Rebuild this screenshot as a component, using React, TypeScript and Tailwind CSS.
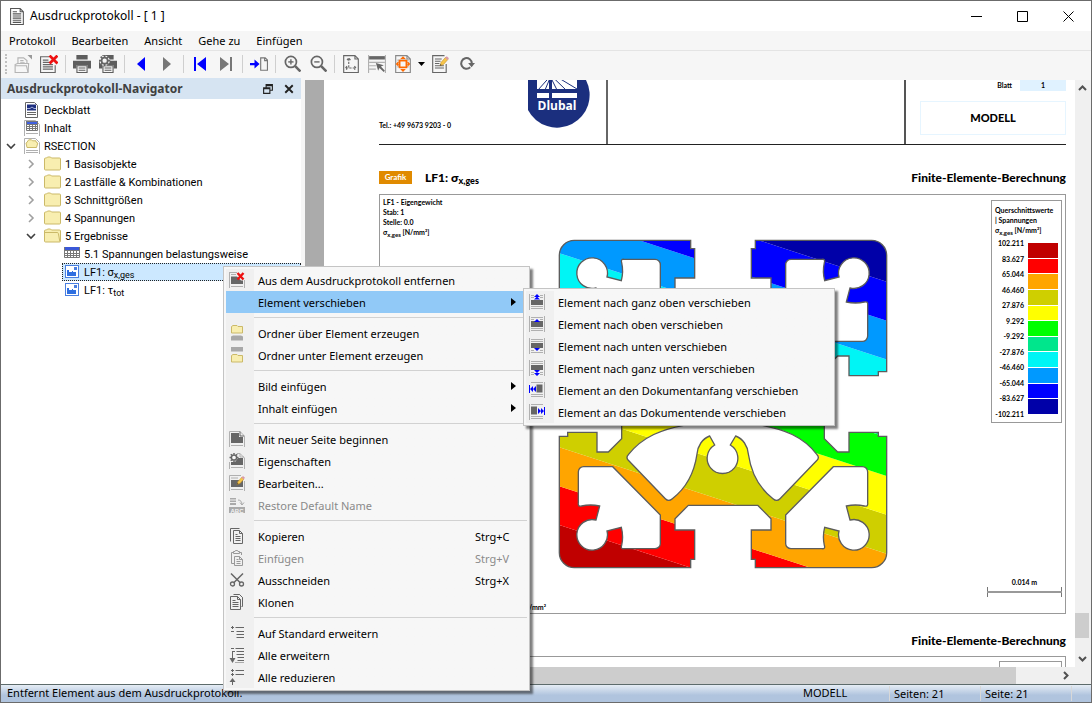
import type { ReactNode } from 'react';

const UI = "font-['Noto_Sans',sans-serif]";
const TREE = "font-['Roboto',sans-serif]";
const DOC = "font-['Lato',sans-serif]";

const G = '#666666';
const L = '#b0b0b0';
const B = '#0000ff';

type IconProps = { children: ReactNode; size?: number };

const Icon = ({ children, size = 16 }: IconProps) => (
  <svg width={size} height={size} viewBox="0 0 16 16" fill="none" className="shrink-0" aria-hidden="true">
    {children}
  </svg>
);

/* ---------- shared glyph parts ---------- */

const Folder = ({ open = false }: { open?: boolean }) => (
  <svg width="17" height="16" viewBox="0 0 17 16" className="shrink-0" aria-hidden="true">
    <path d="M.5 13V3q0-1 1-1H2.500l1-1h3l1 1h8q1 0 1 1v10q0 1-1 1h-14q-1 0-1-1z" fill="#f8eeb0" stroke="#cbb968" />
    {open && <path d="M.8 4.500h12.400q1 0 1.200 1l1.400 8" fill="none" stroke="#cbb968" />}
  </svg>
);

const SideLines = () => <path d="M.5 0v16M15.500 0v16" stroke={L} />;

const Cross = () => <path d="M8.500 1l6 6.500M14.500 1l-6 6.500" stroke="#ee1111" strokeWidth="2.400" />;

const Pencil = () => (
  <>
    <path d="M8 9.500l1-3 4-4.500 2 2-4 4.500z" fill="#f7c64b" stroke="#c08a20" strokeWidth=".5" />
    <path d="M12.500 2.500l1.500-1.500 2 1.800-1.500 1.700z" fill="#d89aa8" />
    <path d="M8 9.500l.5-1.500 1 1z" fill="#333" />
  </>
);

const PageOutline = ({ color = G }: { color?: string }) => (
  <path d="M1.500.5h10l3 3v12h-13zM11.500.5v3h3" stroke={color} />
);

/* ---------- context menu icons ---------- */

const icons = {
  remove: (
    <Icon>
      <path d="M.5 0v16M15.500 8v8M2 14.500h12M1 .5h7M2 2.500h5" stroke={L} />
      <path d="M2 4.500h6l4 4h2v3.500H2z" fill={G} />
      <Cross />
    </Icon>
  ),
  folderAbove: (
    <Icon>
      <path d="M2.500 8V1.500L4 .5h4l1 1h4.500V8z" fill="#f8eeb0" stroke="#cbb968" />
      <path d="M2 15.500v-4l2-1h8l2 1v4z" fill="#a8a8a8" />
    </Icon>
  ),
  folderBelow: (
    <Icon>
      <path d="M2 0h12v4.500H2z" fill="#a8a8a8" />
      <path d="M2.500 15V8.500L4 7.500h4l1 1h4.500V15z" fill="#f8eeb0" stroke="#cbb968" />
    </Icon>
  ),
  newPage: (
    <Icon>
      <path d="M.5 16V.5H11L15.500 5V16M2 14.500h12" stroke={L} />
      <path d="M2 2h8v4h4v6H2z" fill={G} />
      <path d="M11 .5V5h4" stroke={G} />
    </Icon>
  ),
  properties: (
    <Icon>
      <path d="M.5 16V9M8 .5h3L15.500 5v11M2 14.500h12" stroke={L} />
      <path d="M9 5h5v7H2V9h4z" fill={G} />
      <circle cx="5" cy="4.500" r="2.600" fill="#f7f7f7" stroke={G} strokeWidth="1.500" />
      <path d="M5 0v1.500M5 7.500V9M.5 4.500H2M8 4.500h1.500M1.800 1.300l1 1M8.200 1.300l-1 1M1.800 7.700l1-1" stroke={G} strokeWidth="1.500" />
      <path d="M11 .5V4h4" stroke={L} />
    </Icon>
  ),
  edit: (
    <Icon>
      <path d="M.5 16V.5H12M15.500 6v10M2 14.500h12M2 3h7" stroke={L} />
      <path d="M2 5h12v7H2z" fill={G} />
      <Pencil />
    </Icon>
  ),
  restore: (
    <Icon>
      <path d="M1 1h6v7H1z" fill="#aaa" />
      <path d="M1 3h6M1 5.500h6" stroke="#f0f0f0" />
      <path d="M9 3q4 0 4 5M11 5.500l2 2.500 2-2.500" stroke="#aaa" />
      <rect x="0" y="10" width="16" height="6" fill="#aaa" />
      <text x="8" y="15.500" fontSize="6" textAnchor="middle" fill="#f6f6f6" fontFamily="Liberation Sans" fontWeight="bold">ABC</text>
    </Icon>
  ),
  copy: (
    <Icon>
      <path d="M1.500 13.500V.5h9" stroke={G} />
      <path d="M4.500 2.500h6l3 3v10h-9zM10.500 2.500v3h3M6.500 6.500h2M6.500 8.500h5M6.500 10.500h5M6.500 12.500h5" stroke={G} />
    </Icon>
  ),
  paste: (
    <Icon>
      <path d="M5 13.500H2.500v-11h2M10.500 2.500h2V5" stroke="#999" />
      <path d="M4.500 3.500h6v-2H9L8.500.5h-2L6 1.500H4.500z" stroke="#999" />
      <path d="M5.500 6.500h5l3 3v6h-8zM10.500 6.500v3h3M7.500 9.500h2M7.500 11.500h4M7.500 13.500h4" stroke="#999" />
    </Icon>
  ),
  cut: (
    <Icon>
      <path d="M2 1.500l9.500 9.500M14 1.500L4.500 11" stroke={G} strokeWidth="1.500" />
      <circle cx="3.500" cy="12" r="2" stroke={G} strokeWidth="1.300" />
      <circle cx="12.500" cy="12" r="2" stroke={G} strokeWidth="1.300" />
    </Icon>
  ),
  clone: (
    <Icon>
      <path d="M4.500.5h6l3 3v9h-1M10.500.5l3 3" stroke={G} />
      <path d="M1.500 2.500h7l3 3v10h-10zM8.500 2.500v3h3M3.500 6.500h3M3.500 8.500h6M3.500 10.500h6M3.500 12.500h6" stroke={G} />
    </Icon>
  ),
  expandDefault: (
    <Icon>
      <path d="M2 2.500h3M3.500 1v3M2 6.500h3M6.500 2.500H15M7.500 6.500H15M7.500 9.500H15M7.500 12.500H15" stroke={G} />
    </Icon>
  ),
  expandAll: (
    <Icon>
      <path d="M2 1.500h3M3.500 5v8M6.500 1.500H15M3 4.500h3M7.500 4.500H15M7.500 7.500H15M8.500 10.500H15M8.500 13.500H15M6 16h9" stroke={G} />
      <path d="M.5 11h6l-3 5z" fill={G} />
    </Icon>
  ),
  collapseAll: (
    <Icon>
      <path d="M2 1.500h3M3.500 0v3M2 5.500h3M3.500 4v3M6.500 1.500H15M6.500 5.500H15M3.500 10v6" stroke={G} />
      <path d="M.5 13h6l-3-4z" fill={G} />
    </Icon>
  ),
  toTop: (
    <Icon>
      <SideLines />
      <path d="M2 1.500h3M11 1.500h3M2 3.500h3M11 3.500h3M2 12.500h12M2 14.500h12" stroke={L} />
      <path d="M2 6h12v5H2z" fill={G} />
      <path d="M8 0l3 3H5zM8 2.500l3 3H5z" fill={B} />
    </Icon>
  ),
  up: (
    <Icon>
      <SideLines />
      <path d="M2 1.500h12M2 12.500h12M2 14.500h12M2 3.500h3M11 3.500h3" stroke={L} />
      <path d="M2 5h12v6H2z" fill={G} />
      <path d="M8 3l3 3H5z" fill={B} />
    </Icon>
  ),
  down: (
    <Icon>
      <SideLines />
      <path d="M2 1.500h12M2 3.500h12M2 12.500h3M11 12.500h3M2 14.500h12" stroke={L} />
      <path d="M2 5h12v5H2z" fill={G} />
      <path d="M8 13l3-3H5z" fill={B} />
    </Icon>
  ),
  toBottom: (
    <Icon>
      <SideLines />
      <path d="M2 1.500h12M2 3.500h12M2 12.500h3M11 12.500h3M2 14.500h3M11 14.500h3" stroke={L} />
      <path d="M2 5h12v5H2z" fill={G} />
      <path d="M8 13l3-3H5zM8 16l3-3H5z" fill={B} />
    </Icon>
  ),
  toStart: (
    <Icon>
      <path d="M2 .5h12M2 12.500h12M2 14.500h12M15.500 0v16" stroke={L} />
      <path d="M7.500 2.500h6v8h-6z" fill={G} />
      <path d="M.5 3v8" stroke={B} />
      <path d="M1 7l3-3v6zM4 7l3-3v6z" fill={B} />
    </Icon>
  ),
  toEnd: (
    <Icon>
      <path d="M2 .5h12M2 12.500h12M2 14.500h12M.5 0v16" stroke={L} />
      <path d="M2 2.500h6v8H2z" fill={G} />
      <path d="M15.500 3v8" stroke={B} />
      <path d="M12 7L9 4v6zM15 7l-3-3v6z" fill={B} />
    </Icon>
  ),
};

type IconName = keyof typeof icons;

type Entry = {
  label: string;
  icon?: IconName;
  shortcut?: string;
  submenu?: boolean;
  active?: boolean;
  disabled?: boolean;
};

const contextGroups: Entry[][] = [
  [
    { label: 'Aus dem Ausdruckprotokoll entfernen', icon: 'remove' },
    { label: 'Element verschieben', submenu: true, active: true },
  ],
  [
    { label: 'Ordner über Element erzeugen', icon: 'folderAbove' },
    { label: 'Ordner unter Element erzeugen', icon: 'folderBelow' },
  ],
  [
    { label: 'Bild einfügen', submenu: true },
    { label: 'Inhalt einfügen', submenu: true },
  ],
  [
    { label: 'Mit neuer Seite beginnen', icon: 'newPage' },
    { label: 'Eigenschaften', icon: 'properties' },
    { label: 'Bearbeiten...', icon: 'edit' },
    { label: 'Restore Default Name', icon: 'restore', disabled: true },
  ],
  [
    { label: 'Kopieren', icon: 'copy', shortcut: 'Strg+C' },
    { label: 'Einfügen', icon: 'paste', shortcut: 'Strg+V', disabled: true },
    { label: 'Ausschneiden', icon: 'cut', shortcut: 'Strg+X' },
    { label: 'Klonen', icon: 'clone' },
  ],
  [
    { label: 'Auf Standard erweitern', icon: 'expandDefault' },
    { label: 'Alle erweitern', icon: 'expandAll' },
    { label: 'Alle reduzieren', icon: 'collapseAll' },
  ],
];

const moveGroups: Entry[][] = [
  [
    { label: 'Element nach ganz oben verschieben', icon: 'toTop' },
    { label: 'Element nach oben verschieben', icon: 'up' },
    { label: 'Element nach unten verschieben', icon: 'down' },
    { label: 'Element nach ganz unten verschieben', icon: 'toBottom' },
    { label: 'Element an den Dokumentanfang verschieben', icon: 'toStart' },
    { label: 'Element an das Dokumentende verschieben', icon: 'toEnd' },
  ],
];

const PopupMenu = ({ groups, className }: { groups: Entry[][]; className: string }) => (
  <div
    role="menu"
    className={`absolute border border-[#c4c4c4] bg-[#f7f7f7] p-0.5 text-[11px] shadow-[3px_3px_2px_rgba(0,0,0,0.5)] ${UI} ${className}`}
  >
    <div className="bg-linear-to-r from-[#f0f0f0] from-[28px] to-[#f7f7f7] to-[28px]">
      {groups.map((group, i) => (
        <div key={i}>
          {i > 0 && (
            <div className="flex h-[9px] items-center pl-7">
              <div className="h-px flex-1 bg-[#d2d2d2]" />
            </div>
          )}
          {group.map((entry) => (
            <button
              key={entry.label}
              type="button"
              role="menuitem"
              disabled={entry.disabled}
              className={`flex h-[22px] w-full items-center pr-[11px] pl-[3px] text-left ${entry.active ? 'bg-[#91c9f7]' : ''} ${entry.disabled ? 'text-[#8a8a8a]' : 'text-black'}`}
            >
              <span className="w-[29px] shrink-0">{entry.icon && icons[entry.icon]}</span>
              <span className="flex-1 pt-0.5 whitespace-nowrap">{entry.label}</span>
              {entry.shortcut && <span className="w-[41px] pt-0.5 whitespace-nowrap">{entry.shortcut}</span>}
              {entry.submenu && (
                <svg width="5" height="8" viewBox="0 0 5 8" aria-hidden="true">
                  <path d="M0 0l5 4-5 4z" />
                </svg>
              )}
            </button>
          ))}
        </div>
      ))}
    </div>
  </div>
);

/* ---------- toolbar ---------- */

const Printer = () => (
  <>
    <path d="M3 0h10v4H3zM0 5h16v7h-3V9H3v3H0z" fill="#5e5e5e" />
    <path d="M3.500 9.500h9v6h-9zM5 11.500h6M5 13.500h6" stroke="#5e5e5e" />
  </>
);

const Magnifier = ({ plus = false }: { plus?: boolean }) => (
  <Icon size={17}>
    <circle cx="6.500" cy="6.500" r="5.200" stroke={G} strokeWidth="1.600" />
    <path d="M10.500 10.500l5 5" stroke={G} strokeWidth="2.400" />
    <path d="M4 6.500h5" stroke={G} strokeWidth="1.300" />
    {plus && <path d="M6.500 4v5" stroke={G} strokeWidth="1.300" />}
  </Icon>
);

type Tool = { name: string; icon: ReactNode };

const toolGroups: Tool[][] = [
  [
    {
      name: 'Öffnen',
      icon: (
        <Icon size={18}>
          <path d="M3.500 7.500V2.500h5l3 2.500v2.500M5.500 5h3M5.500 7h4M1 15.500V8.500l2-1h10l-.5 8z" stroke="#b4b4b4" />
          <path d="M1 9.500h10l1.500 6" stroke="#b4b4b4" />
          <path d="M12 0h4v4z" fill="#999" />
        </Icon>
      ),
    },
    {
      name: 'Löschen',
      icon: (
        <Icon size={18}>
          <path d="M8 1.500H.5v14h13V9M2.500 4.500h5M2.500 6.500h6M2.500 8.500h9M2.500 10.500h9M2.500 12.500h9" stroke={G} />
          <path d="M8.500.5l7 7M15.500.5l-7 7" stroke="#ee1111" strokeWidth="2.400" />
        </Icon>
      ),
    },
  ],
  [
    { name: 'Drucken', icon: <Icon size={18}><Printer /></Icon> },
    {
      name: 'Druckeinstellungen',
      icon: (
        <Icon size={18}>
          <Printer />
          <circle cx="5" cy="5" r="4.600" fill="#f6f6f6" />
          <circle cx="5" cy="5" r="2.700" stroke={G} strokeWidth="1.500" />
          <path d="M5 0v2M5 8v2M0 5h2M8 5h2M1.500 1.500l1.300 1.300M7.200 7.200l1.300 1.300M8.500 1.500L7.200 2.800M2.800 7.200L1.500 8.500" stroke={G} strokeWidth="1.500" />
        </Icon>
      ),
    },
  ],
  [
    { name: 'Zurück', icon: <Icon><path d="M12 1v14L4 8z" fill={B} /></Icon> },
    { name: 'Vorwärts', icon: <Icon><path d="M4 1v14l8-7z" fill="#777" /></Icon> },
  ],
  [
    { name: 'Erste Seite', icon: <Icon><path d="M2 1h2v14H2zM14 1v14L5 8z" fill={B} /></Icon> },
    { name: 'Letzte Seite', icon: <Icon><path d="M12 1h2v14h-2zM2 1v14l9-7z" fill="#777" /></Icon> },
  ],
  [
    {
      name: 'Gehe zu Seite',
      icon: (
        <Icon size={18}>
          <path d="M0 7h4V4l4.500 4L4 12V9H0z" fill={B} />
          <path d="M9.500 2.500h4l2 2v9h-6zM13 2.500V5h2.500" stroke="#777" />
        </Icon>
      ),
    },
  ],
  [
    { name: 'Vergrößern', icon: <Magnifier plus /> },
    { name: 'Verkleinern', icon: <Magnifier /> },
  ],
  [
    {
      name: 'Ganze Seite',
      icon: (
        <Icon size={18}>
          <PageOutline />
          <path d="M6 3v9M3.500 11.500h9M4.500 4.500L6 2.500l1.500 2M11 10l1.500 1.500L11 13M4.500 10L3 11.500 4.500 13" stroke={G} strokeDasharray="2 1" />
        </Icon>
      ),
    },
    {
      name: 'Auswahl',
      icon: (
        <Icon size={18}>
          <path d="M.5 0v16M15.500 0v16" stroke={L} />
          <path d="M1 1h14v3H1z" fill={G} />
          <path d="M1 6.500h14M1 9.500h6M1 12.500h6" stroke={L} />
          <path d="M7 7l7 2-2.500 1.200L15 14l-1 1-3.800-3.500L9 14z" fill={G} />
        </Icon>
      ),
    },
    {
      name: 'Seitenausrichtung',
      icon: (
        <Icon size={18}>
          <PageOutline color="#888" />
          <path d="M3 4.500h10M3 6.500h10M3 8.500h10M3 10.500h10" stroke={L} />
          <rect x="5" y="5" width="6" height="6" fill="#f6f6f6" stroke="#ff6a00" strokeWidth="1.500" />
          <path d="M8 1l2.500 2.500h-5zM8 15l2.500-2.500h-5zM1.500 8L4 5.500v5zM14.500 8L12 5.500v5z" fill="#ff6a00" />
        </Icon>
      ),
    },
  ],
];

const trailingTools: Tool[] = [
  {
    name: 'Bearbeiten',
    icon: (
      <Icon size={18}>
        <path d="M12 .5H1.500v15h12V8M3.500 3.500h6M3.500 5.500h5M3.500 7.500h4M3.500 9.500h8M3.500 11.500h8" stroke={G} />
        <Pencil />
      </Icon>
    ),
  },
  {
    name: 'Aktualisieren',
    icon: (
      <Icon size={17}>
        <path d="M11.500 11.500A5 5 0 1 1 13 8" stroke={G} strokeWidth="1.900" />
        <path d="M9.500 7.500h6.500l-3.200 4z" fill={G} />
      </Icon>
    ),
  },
];

const ToolButton = ({ name, icon }: Tool) => (
  <button type="button" aria-label={name} className="flex h-6 w-[26px] items-center justify-center">
    {icon}
  </button>
);

const Toolbar = () => (
  <div role="toolbar" className="flex h-[27px] shrink-0 items-center bg-[#f6f6f6] pb-0.5 pl-1">
    <span className="mr-[3px] h-5 border-l-2 border-dotted border-[#c0c0c0]" />
    {toolGroups.map((group, i) => (
      <div key={i} className="flex items-center">
        {i > 0 && <span className="mx-[3px] h-[18px] w-px bg-[#cfcfcf]" />}
        {group.map((tool) => (
          <ToolButton key={tool.name} {...tool} />
        ))}
      </div>
    ))}
    <button type="button" aria-label="Optionen" className="flex w-[11px] justify-center">
      <svg width="7" height="4" viewBox="0 0 7 4" aria-hidden="true">
        <path d="M0 0h7L3.500 4z" />
      </svg>
    </button>
    {trailingTools.map((tool) => (
      <ToolButton key={tool.name} {...tool} />
    ))}
  </div>
);

/* ---------- navigator ---------- */

const Chevron = ({ open }: { open: boolean }) => (
  <svg width="10" height="10" viewBox="0 0 10 10" fill="none" aria-hidden="true">
    <path d={open ? 'M1 3l4 4 4-4' : 'M3 1l4 4-4 4'} stroke={open ? '#404040' : '#a0a0a0'} strokeWidth="1.600" />
  </svg>
);

const CoverIcon = () => (
  <Icon>
    <path d="M1.500.5h9l3 3v12h-12z" fill="#fff" stroke={G} />
    <path d="M3 2.500h9v6H3z" fill="#1e2f80" />
    <path d="M3 6.500h3l2-1.500 2 1.500h2" stroke="#c8d0f0" strokeWidth=".8" />
    <path d="M3 10.500h9M3 12.500h9" stroke={G} />
  </Icon>
);

const TableGrid = () => (
  <>
    <path d="M2 1h12v3.500H2z" fill="#4060e0" />
    <path d="M2.500 1.500h11v9h-11zM2 4.500h12M2 6.500h12M2 8.500h12M5.500 4v7M8.500 4v7M11.500 4v7" stroke="#777" />
  </>
);

const ContentsIcon = () => (
  <Icon>
    <path d="M.5 16V.5h11l4 4V16M2 13.500h12" stroke={L} />
    <TableGrid />
  </Icon>
);

const ModelIcon = () => (
  <Icon>
    <path d="M.5 16V.5h11l4 4V16M2 12.500h12M2 14.500h12" stroke={L} />
    <path d="M3 9.500L2 5l1.500-1V3L5 1.800h2.500l1 1H12V4l1.800 1-1.300 4.500z" fill="#f8eeb0" stroke="#cbb968" />
  </Icon>
);

const TableIcon = () => (
  <Icon>
    <path d="M.5 1.500h15v10H.5z" fill="#fff" />
    <path d="M0 1h16v3H0z" fill="#3a58d8" />
    <path d="M.5 1v10.500h15V1M0 4.500h16M0 7.500h16M0 9.500h16M3.500 4v8M6.500 4v8M9.500 4v8M12.500 4v8" stroke="#777" />
  </Icon>
);

const GraphicIcon = () => (
  <Icon>
    <rect x="1.500" y="1.500" width="13" height="12" fill="#fff" stroke="#4a7fe0" />
    <path d="M3 12V6h2v2h3v-1h1v1h3v4z" fill="#2f6fe0" />
    <path d="M10 3h3v3h-3z" fill="#4a7fe0" />
  </Icon>
);

type Node = { label: ReactNode; level: 0 | 1 | 2; icon: ReactNode; open?: boolean; selected?: boolean };

const nodes: Node[] = [
  { label: 'Deckblatt', level: 0, icon: <CoverIcon /> },
  { label: 'Inhalt', level: 0, icon: <ContentsIcon /> },
  { label: 'RSECTION', level: 0, icon: <ModelIcon />, open: true },
  { label: '1 Basisobjekte', level: 1, icon: <Folder />, open: false },
  { label: '2 Lastfälle & Kombinationen', level: 1, icon: <Folder />, open: false },
  { label: '3 Schnittgrößen', level: 1, icon: <Folder />, open: false },
  { label: '4 Spannungen', level: 1, icon: <Folder />, open: false },
  { label: '5 Ergebnisse', level: 1, icon: <Folder open />, open: true },
  { label: '5.1 Spannungen belastungsweise', level: 2, icon: <TableIcon /> },
  { label: <>LF1: σ<sub className="text-[9px]">x,ges</sub></>, level: 2, icon: <GraphicIcon />, selected: true },
  { label: <>LF1: τ<sub className="text-[9px]">tot</sub></>, level: 2, icon: <GraphicIcon /> },
];

const indents = ['pl-[5px]', 'pl-[25px]', 'pl-[42px]'];

const Navigator = () => (
  <aside className="flex w-[300px] shrink-0 flex-col bg-white">
    <header className="flex h-[21px] items-center bg-[#d6e4f2] pr-[7px] pl-1.5">
      <h2 className={`flex-1 text-[12px] font-bold text-[#404040] ${UI}`}>Ausdruckprotokoll-Navigator</h2>
      <button type="button" aria-label="Andocken" className="mr-[11px]">
        <Icon size={10}>
          <path d="M5 5V1h10v9h-4M1 6h10v9H1zM1 7.500h10M5 2.500h10" stroke="#222" strokeWidth="1.800" />
        </Icon>
      </button>
      <button type="button" aria-label="Schließen">
        <Icon size={10}>
          <path d="M2 2l12 12M14 2L2 14" stroke="#222" strokeWidth="3" />
        </Icon>
      </button>
    </header>
    <ul role="tree" className={`pt-0.5 text-[11px] text-black ${TREE}`}>
      {nodes.map((node, i) => (
        <li key={i} role="treeitem" aria-selected={!!node.selected} className={`flex h-[18px] items-center ${indents[node.level]}`}>
          {node.level < 2 && (
            <button type="button" aria-label="Umschalten" className="mr-2 flex w-[10px] shrink-0">
              {node.open !== undefined && <Chevron open={node.open} />}
            </button>
          )}
          <button
            type="button"
            className={`flex h-[18px] items-center gap-1 whitespace-nowrap ${node.level === 2 ? 'ml-[19px] flex-1 pl-0.5' : ''} ${node.selected ? 'bg-[#cce8ff] outline-1 -outline-offset-1 outline-dotted outline-[#222]' : ''}`}
          >
            {node.icon}
            <span className="pt-0.5 leading-4">{node.label}</span>
          </button>
        </li>
      ))}
    </ul>
  </aside>
);

/* ---------- document page ---------- */

const Logo = () => (
  <svg width="62" height="48" viewBox="0 0 62 48" role="img" aria-label="Dlubal">
    <path d="M58 0A32 32 0 0 1 0 30V0z" fill="#1b2f7e" />
    <path d="M9 0h40v18H9z" fill="#fff" />
    <path d="M22.500 -4L10 10M22.500 -3L17 10M22.500 -3L29 10M22.500 -5L38 10M22.500 -7L49 9" stroke="#1b2f7e" />
    <path d="M9 9h40v4H9zM21 0h3v18h-3z" fill="#1b2f7e" />
    <text x="29" y="30" fontSize="12" fontWeight="bold" fill="#fff" textAnchor="middle" fontFamily="Open Sans, sans-serif">
      Dlubal
    </text>
  </svg>
);

const legendValues = [
  '102.211', '83.627', '65.044', '46.460', '27.876', '9.292',
  '-9.292', '-27.876', '-46.460', '-65.044', '-83.627', '-102.211',
];

const bandColors = [
  '#c00000', '#ff0000', '#ffa500', '#cfcf00', '#ffff00', '#00ff00',
  '#00e68c', '#00f5f5', '#0099ff', '#0000ff', '#0000a8',
];

const quarterOutline = [
  [104, 304], [144, 344], [144, 378], [85, 378], [85, 466], [97, 466], [97, 491],
  [446, 491], [491, 446], [491, 97], [466, 97], [466, 85], [378, 85], [378, 144], [344, 144], [304, 104],
];

const outline = (() => {
  const quadrants = [[1, 1], [1, -1], [-1, -1], [-1, 1]];
  const parts: string[] = [];
  quadrants.forEach(([sx, sy], q) => {
    const reversed = sx * sy < 0;
    const points = reversed ? [...quarterOutline].reverse() : quarterOutline;
    points.forEach(([x, y], i) => {
      const corner = i === 8;
      const command = q === 0 && i === 0 ? 'M' : corner ? 'A45 45 0 0 0 ' : 'L';
      parts.push(`${command}${x * sx} ${y * sy}`);
    });
  });
  return `${parts.join('')}Z`;
})();

const portHole =
  'M417 188L331 188L188 333V417A16 16 0 0 0 204 434H296Q308 436 304 424Q298 397 305 370L348 381A46 46 0 1 0 381 348L370 306Q398 300 424 306Q436 309 434 296V204A16 16 0 0 0 417 188Z';

const fanHole =
  'M-118 64C-180 76 -240 96 -284 152Q-292 160 -284 169L-173 284Q-163 294 -152 284C-110 252 -86 205 -78 150C-76 126 -62 104 -40 96L-25 123A46 46 0 1 0 22 123L38 96C60 104 74 126 76 150C84 205 108 252 150 284Q161 294 171 284L282 169Q290 160 282 152C240 96 180 76 118 64Z';

const Profile = () => {
  const flips = ['scale(1 1)', 'scale(-1 1)', 'scale(1 -1)', 'scale(-1 -1)'];
  return (
    <svg width="330" height="330" viewBox="-495 -495 990 990" className="shrink-0" role="img" aria-label="Spannungsverteilung">
      <clipPath id="profile">
        <path d={outline} />
      </clipPath>
      <g clipPath="url(#profile)">
        {bandColors.map((color, i) => {
          const top = i === bandColors.length - 1 ? -1400 : 363 - i * 116.5;
          const bottom = i === 0 ? 1200 : 363 - (i - 1) * 116.5;
          return <path key={color} d={`M-491 ${top}L491 ${top + 319}V${bottom + 319}L-491 ${bottom}Z`} fill={color} />;
        })}
      </g>
      <g stroke="#5c5c5c" strokeWidth="4">
        <path d={outline} fill="none" />
        {flips.map((flip) => (
          <path key={flip} d={portHole} transform={flip} fill="#fff" />
        ))}
        <path d={fanHole} fill="#fff" />
        <path d={fanHole} fill="#fff" transform="scale(1 -1)" />
      </g>
    </svg>
  );
};

const Legend = () => (
  <div className="mt-[5px] mr-[3px] h-[223px] w-[71px] shrink-0 border border-[#999] px-[3px] pt-1 text-[7px] leading-[10px] font-bold whitespace-nowrap">
    <p>Querschnittswerte</p>
    <p>| Spannungen</p>
    <p>
      σ<sub className="text-[6px]">x,ges</sub> [N/mm²]
    </p>
    <div className="mt-[3px] flex justify-end gap-1">
      <ul className="flex h-[181px] flex-col justify-between text-right">
        {legendValues.map((value) => (
          <li key={value}>{value}</li>
        ))}
      </ul>
      <div className="my-[5px] flex w-[30px] shrink-0 flex-col gap-px">
        {bandColors.map((color) => (
          <span key={color} className="flex-1" style={{ backgroundColor: color }} />
        ))}
      </div>
    </div>
  </div>
);

const DocumentPage = () => (
  <article className={`flex min-w-0 flex-1 flex-col overflow-hidden bg-white pr-[9px] pl-[55px] text-black ${DOC}`}>
    <header className="flex h-[65px] shrink-0 border-b border-[#222]">
      <div className="flex w-[229px] shrink-0 justify-between border-r-2 border-[#666] pr-4">
        <p className="self-end pb-3 text-[7px] leading-[14px] font-bold">Tel.: +49 9673 9203 - 0</p>
        <Logo />
      </div>
      <div className="flex-1 border-r-2 border-[#555]" />
      <div className="flex w-[160px] shrink-0 flex-col gap-[10px] pl-[14px]">
        <div className="flex justify-end gap-2 text-[7px] leading-[11px] font-bold">
          <span>Blatt</span>
          <span className="w-[46px] bg-[#e0f2ff] text-center">1</span>
        </div>
        <p className="border border-[#e6f5ff] py-2 text-center text-[11px] leading-4 font-black">MODELL</p>
      </div>
    </header>

    <div className="mt-6 flex h-[17px] shrink-0 items-center">
      <span className="h-[13px] w-[33px] bg-[#e08a00] text-center text-[8px] leading-[12px] font-bold text-white">Grafik</span>
      <h3 className="ml-[13px] text-[12px] leading-[17px] font-black">
        LF1: σ<sub className="text-[9px]">x,ges</sub>
      </h3>
      <p className="ml-auto text-[12px] leading-[17px] font-black">Finite-Elemente-Berechnung</p>
    </div>

    <section className="mt-2 shrink-0 border border-[#999]">
      <div className="flex items-start">
        <div className="w-[178px] shrink-0 pt-0.5 pl-[3px] text-[7px] leading-[10px] font-bold">
          <p>LF1 - Eigengewicht</p>
          <p>Stab: 1</p>
          <p>Stelle: 0.0</p>
          <p>
            σ<sub className="text-[6px]">x,ges</sub> [N/mm²]
          </p>
        </div>
        <div className="flex-1 pt-11">
          <Profile />
        </div>
        <Legend />
      </div>
      <div className="mt-[8px] flex h-[36px] justify-between pr-[3px]">
        <p className="w-[166px] self-end pb-px text-right text-[7px] leading-[10px] font-bold">N/mm²</p>
        <div className="w-[75px] text-center text-[7px] leading-[10px] font-bold">
          <p>0.014 m</p>
          <svg width="75" height="10" viewBox="0 0 75 10" aria-hidden="true">
            <path d="M.5 0v10M74.500 0v10" stroke="#777" />
            <path d="M0 5h75" stroke="#999" strokeWidth="2" />
          </svg>
        </div>
      </div>
    </section>

    <p className="mt-[18px] shrink-0 text-right text-[12px] leading-[17px] font-black">Finite-Elemente-Berechnung</p>
    <section className="mt-[7px] flex h-20 shrink-0 justify-end border border-[#999] pt-1 pr-[3px]">
      <div className="w-[63px] border border-[#999]" />
    </section>
  </article>
);

const ScrollArrow = ({ d }: { d: string }) => (
  <svg width="9" height="9" viewBox="0 0 9 9" fill="none" aria-hidden="true">
    <path d={d} stroke="#505050" strokeWidth="2" />
  </svg>
);

const Viewer = () => (
  <main className="mt-0.5 ml-1 flex min-w-0 flex-1 flex-col">
    <div className="flex min-h-0 flex-1">
      <div className="w-[19px] shrink-0 bg-[#ababab]" />
      <DocumentPage />
      <div className="flex w-4 shrink-0 flex-col items-center bg-[#f0f0f0] pr-0.5">
        <button type="button" aria-label="Nach oben" className="flex h-[17px] items-center">
          <ScrollArrow d="M1 6l3.500-3.500L8 6" />
        </button>
        <div className="flex-1" />
        <div className="h-[25px] w-full bg-[#cdcdcd]" />
        <div className="h-3" />
        <button type="button" aria-label="Nach unten" className="flex h-[17px] items-center">
          <ScrollArrow d="M1 3l3.500 3.500L8 3" />
        </button>
      </div>
    </div>
    <div className="flex h-[17px] shrink-0 bg-[#f0f0f0]">
      <div className="flex-1 bg-[#cdcdcd]" />
      <div className="w-[45px]" />
      <button type="button" aria-label="Nach rechts" className="mr-[21px] flex items-center">
        <ScrollArrow d="M3 1l3.500 3.500L3 8" />
      </button>
    </div>
  </main>
);

const menuItems = ['Protokoll', 'Bearbeiten', 'Ansicht', 'Gehe zu', 'Einfügen'];

const windowButtons = [
  { name: 'Minimieren', d: 'M0 5.500h11' },
  { name: 'Maximieren', d: 'M.5.5h10v10H.5z' },
  { name: 'Schließen', d: 'M.5.500l10 10M10.500.5l-10 10' },
];

const App = () => (
  <div className={`relative flex h-screen flex-col overflow-hidden border border-[#6b6b6b] bg-[#f6f6f6] text-black ${UI}`}>
    <header className="flex h-[30px] shrink-0 items-center bg-white pl-2">
      <Icon size={17}>
        <path d="M1.500.5h9l3 3v12h-12zM10.500.5v3h3M3.500 3.500h4M3.500 5.500h8M3.500 7.500h8M3.500 9.500h8M3.500 11.500h8M3.500 13.500h8" stroke="#555" />
      </Icon>
      <h1 className="ml-1 flex-1 text-[12px]">Ausdruckprotokoll - [ 1 ]</h1>
      {windowButtons.map(({ name, d }) => (
        <button key={name} type="button" aria-label={name} className="flex h-full w-[46px] items-center justify-center">
          <svg width="11" height="11" viewBox="0 0 11 11" fill="none" aria-hidden="true">
            <path d={d} stroke="#000" />
          </svg>
        </button>
      ))}
    </header>
    <nav className="flex h-5 shrink-0 items-center gap-4 border-b border-[#e4e4e4] pt-0.5 pl-2 text-[11px]">
      {menuItems.map((item) => (
        <button key={item} type="button">
          {item}
        </button>
      ))}
    </nav>
    <Toolbar />
    <div className="flex min-h-0 flex-1">
      <Navigator />
      <Viewer />
    </div>
    <footer className="flex h-[18px] shrink-0 items-center border-t border-[#5d6b6b] bg-linear-to-b from-[#e6edf5] to-[#b0c4de] to-60% pl-1.5 text-[11px]">
      <p className="flex-1">Entfernt Element aus dem Ausdruckprotokoll.</p>
      <p className="w-[86px]">MODELL</p>
      <p className="w-[91px] border-l border-[#d8d8d8] pl-1 leading-[15px]">Seiten: 21</p>
      <p className="w-[91px] border-l border-[#d8d8d8] pl-1 leading-[15px]">Seite: 21</p>
      <span className="h-[15px] w-5 border-l border-[#d8d8d8]" />
    </footer>

    <PopupMenu groups={contextGroups} className="top-[265px] left-[222px] w-[307px]" />
    <PopupMenu groups={moveGroups} className="top-[287px] left-[522px] w-[312px]" />
  </div>
);

export default App;
